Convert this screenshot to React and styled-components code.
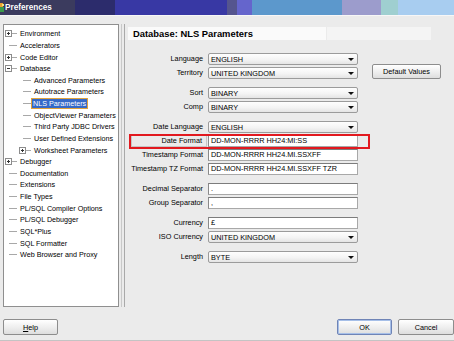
import React from 'react'
import styled, { createGlobalStyle } from 'styled-components'

const GlobalStyle = createGlobalStyle`
  html, body {
    margin: 0;
    padding: 0;
    background: #ebebeb;
  }
  body {
    font-family: 'Liberation Sans', Arial, sans-serif;
    font-size: 7.3px;
    color: #000;
  }
`

const Window = styled.div`
  width: 454px;
  height: 341px;
  display: flex;
  flex-direction: column;
  background: #ebebeb;
  border-bottom: 1px solid #c4c4c4;
  box-sizing: border-box;
  overflow: hidden;
`

const TitleBar = styled.div`
  height: 15px;
  flex-shrink: 0;
  display: flex;
  align-items: center;
  gap: 1px;
  border-bottom: 1px solid #f7f7f7;
  background: linear-gradient(
    to right,
    #3b3b5e 0 75px,
    #2c2c6c 75px 115px,
    #3838a4 115px 227px,
    #55558e 227px 237px,
    #6565cc 237px 252px,
    #5c98cc 252px 342px,
    #9c9ccc 342px 381px,
    #9fcfd0 381px 398px,
    #a8cdf0 398px
  );
`

const Title = styled.span`
  color: #fff;
  font-weight: bold;
  font-size: 8.2px;
  text-shadow: 0 0 1px #20204a;
`

const Body = styled.div`
  display: flex;
  height: 291px;
  flex-shrink: 0;
  padding: 8px 0 0 3px;
  box-sizing: border-box;
`

const TreePanel = styled.div`
  width: 116px;
  height: 283px;
  box-sizing: border-box;
  background: #fff;
  border: 1px solid #8f8f8f;
  padding-top: 3px;
  overflow: hidden;
  font-size: 7.2px;
`

const TreeRow = styled.div`
  display: flex;
  align-items: center;
  height: 11.63px;
  padding-left: ${p => (p.$level ? 15 : 1)}px;
  white-space: nowrap;
`

const Expander = styled.span`
  position: relative;
  width: 7px;
  height: 7px;
  box-sizing: border-box;
  flex-shrink: 0;
  ${p =>
    p.$kind
      ? `
    border: 1px solid #8c8c8c;
    background: #fff;
    &::before {
      content: '';
      position: absolute;
      left: 1px;
      top: 2px;
      width: 3px;
      height: 1px;
      background: #333;
    }
  `
      : `
    &::before {
      content: '';
      position: absolute;
      left: 4px;
      top: 3px;
      width: 3px;
      height: 1px;
      background: #a8a8a8;
    }
  `}
  ${p =>
    p.$kind === 'plus' &&
    `
    &::after {
      content: '';
      position: absolute;
      left: 2px;
      top: 1px;
      width: 1px;
      height: 3px;
      background: #333;
    }
  `}
`

const Connector = styled.span`
  width: 5px;
  height: 1px;
  background: #a8a8a8;
  flex-shrink: 0;
`

const NodeLabel = styled.span`
  margin-left: ${p => (p.$selected ? 0 : 1)}px;
  padding: 0 1px;
  line-height: 9px;
  border: 1px solid ${p => (p.$selected ? '#e0a23c' : 'transparent')};
  background: ${p => (p.$selected ? '#3569c8' : 'transparent')};
  color: ${p => (p.$selected ? '#fff' : '#000')};
`

const Splitter = styled.div`
  width: 4px;
  height: 283px;
  margin: 0 3px 0 2px;
  box-sizing: border-box;
  border-left: 1px solid #c9c9c9;
  border-right: 1px solid #a9a9a9;
`

const Content = styled.div`
  flex: 1;
  padding-top: 3px;
  display: flex;
  flex-direction: column;
`

const Header = styled.div`
  width: 303px;
  height: 13px;
  line-height: 13px;
  padding-left: 5px;
  box-sizing: border-box;
  font-weight: bold;
  font-size: 9.4px;
  background: linear-gradient(to right, #fafafa 0 198px, #ebebeb 198px 199px, #f4f4f4 199px);
`

const Form = styled.div`
  margin-top: 13px;
  display: flex;
  flex-direction: column;
`

const Group = styled.div`
  position: relative;
  display: grid;
  grid-template-columns: 75px 150px auto;
  grid-auto-rows: 12px;
  column-gap: 5px;
  row-gap: 2px;
  & + & {
    margin-top: 8px;
  }
`

const Label = styled.div`
  text-align: right;
  line-height: 12px;
  white-space: nowrap;
  ${p =>
    p.$boxed &&
    `
    margin: 0 -4px 0 3px;
    padding-right: 4px;
    line-height: 10px;
    border: 1px solid #c6c6c6;
  `}
`

const Combo = styled.div`
  display: flex;
  align-items: center;
  justify-content: space-between;
  box-sizing: border-box;
  padding: 0 3px 0 2px;
  border: 1px solid #9b9b9b;
  border-radius: 2px;
  background: linear-gradient(#fefefe, #f4f4f4 55%, #e4e4e4);
  white-space: nowrap;
  &::after {
    content: '';
    border-left: 3px solid transparent;
    border-right: 3px solid transparent;
    border-top: 3px solid #111;
  }
`

const TextField = styled.div`
  box-sizing: border-box;
  padding-left: 2px;
  line-height: 10px;
  background: #fff;
  border: 1px solid #a8a8a8;
  border-top-color: #7c7c7c;
  border-left-color: #8a8a8a;
  white-space: nowrap;
`

const Highlight = styled.div`
  position: absolute;
  left: 1px;
  top: 13px;
  width: 241px;
  height: 15px;
  box-sizing: border-box;
  border: 2px solid #e2191f;
  pointer-events: none;
`

const Button = styled.button`
  font-family: inherit;
  font-size: 7.3px;
  color: #000;
  height: 16px;
  width: ${p => p.$width || 55}px;
  padding: 0;
  border: 1px solid ${p => (p.$focused ? '#6f84b6' : '#8d8d8d')};
  border-radius: 2px;
  background: linear-gradient(#ffffff, #efefef 50%, #dedede);
  box-shadow: ${p => (p.$focused ? 'inset 0 0 0 1px #a6bfe8' : 'none')};
  flex-shrink: 0;
`

const SideButton = styled(Button)`
  height: 15px;
  margin: -3px 0 0 9px;
`

const Footer = styled.div`
  display: flex;
  justify-content: space-between;
  padding: 12px 0 0 3px;
`

const FooterRight = styled.div`
  display: flex;
  gap: 6px;
`

const tree = [
  { label: 'Environment', level: 0, kind: 'plus' },
  { label: 'Accelerators', level: 0 },
  { label: 'Code Editor', level: 0, kind: 'plus' },
  { label: 'Database', level: 0, kind: 'minus' },
  { label: 'Advanced Parameters', level: 1 },
  { label: 'Autotrace Parameters', level: 1 },
  { label: 'NLS Parameters', level: 1, selected: true },
  { label: 'ObjectViewer Parameters', level: 1 },
  { label: 'Third Party JDBC Drivers', level: 1 },
  { label: 'User Defined Extensions', level: 1 },
  { label: 'Worksheet Parameters', level: 1, kind: 'plus' },
  { label: 'Debugger', level: 0, kind: 'plus' },
  { label: 'Documentation', level: 0 },
  { label: 'Extensions', level: 0 },
  { label: 'File Types', level: 0 },
  { label: 'PL/SQL Compiler Options', level: 0 },
  { label: 'PL/SQL Debugger', level: 0 },
  { label: 'SQL*Plus', level: 0 },
  { label: 'SQL Formatter', level: 0 },
  { label: 'Web Browser and Proxy', level: 0 },
]

function AppIcon() {
  return (
    <svg width="4" height="11" viewBox="0 0 4 11">
      <rect x="0" y="1" width="3" height="4" fill="#e8a030" />
      <rect x="0" y="5" width="4" height="5" fill="#3c9a4a" />
      <rect x="2" y="2" width="2" height="2" fill="#f4e27a" />
    </svg>
  )
}

function Field({ label, value, combo, boxed }) {
  return (
    <>
      <Label $boxed={boxed}>{label}</Label>
      {combo ? <Combo>{value}</Combo> : <TextField>{value}</TextField>}
      <span />
    </>
  )
}

export default function App() {
  return (
    <Window>
      <GlobalStyle />
      <TitleBar>
        <AppIcon />
        <Title>Preferences</Title>
      </TitleBar>

      <Body>
        <TreePanel>
          {tree.map(item => (
            <TreeRow key={item.label} $level={item.level}>
              <Expander $kind={item.kind} />
              <Connector />
              <NodeLabel $selected={item.selected}>{item.label}</NodeLabel>
            </TreeRow>
          ))}
        </TreePanel>
        <Splitter />

        <Content>
          <Header>Database: NLS Parameters</Header>
          <Form>
            <Group>
              <Field label="Language" value="ENGLISH" combo />
              <Label>Territory</Label>
              <Combo>UNITED KINGDOM</Combo>
              <SideButton $width={69}>Default Values</SideButton>
            </Group>
            <Group>
              <Field label="Sort" value="BINARY" combo />
              <Field label="Comp" value="BINARY" combo />
            </Group>
            <Group>
              <Field label="Date Language" value="ENGLISH" combo />
              <Field label="Date Format" value="DD-MON-RRRR HH24:MI:SS" boxed />
              <Field label="Timestamp Format" value="DD-MON-RRRR HH24.MI.SSXFF" />
              <Field label="Timestamp TZ Format" value="DD-MON-RRRR HH24.MI.SSXFF TZR" />
              <Highlight />
            </Group>
            <Group>
              <Field label="Decimal Separator" value="." />
              <Field label="Group Separator" value="," />
            </Group>
            <Group>
              <Field label="Currency" value="£" />
              <Field label="ISO Currency" value="UNITED KINGDOM" combo />
            </Group>
            <Group>
              <Field label="Length" value="BYTE" combo />
            </Group>
          </Form>
        </Content>
      </Body>

      <Footer>
        <Button>
          <u>H</u>elp
        </Button>
        <FooterRight>
          <Button $focused>OK</Button>
          <Button $width={56}>Cancel</Button>
        </FooterRight>
      </Footer>
    </Window>
  )
}
